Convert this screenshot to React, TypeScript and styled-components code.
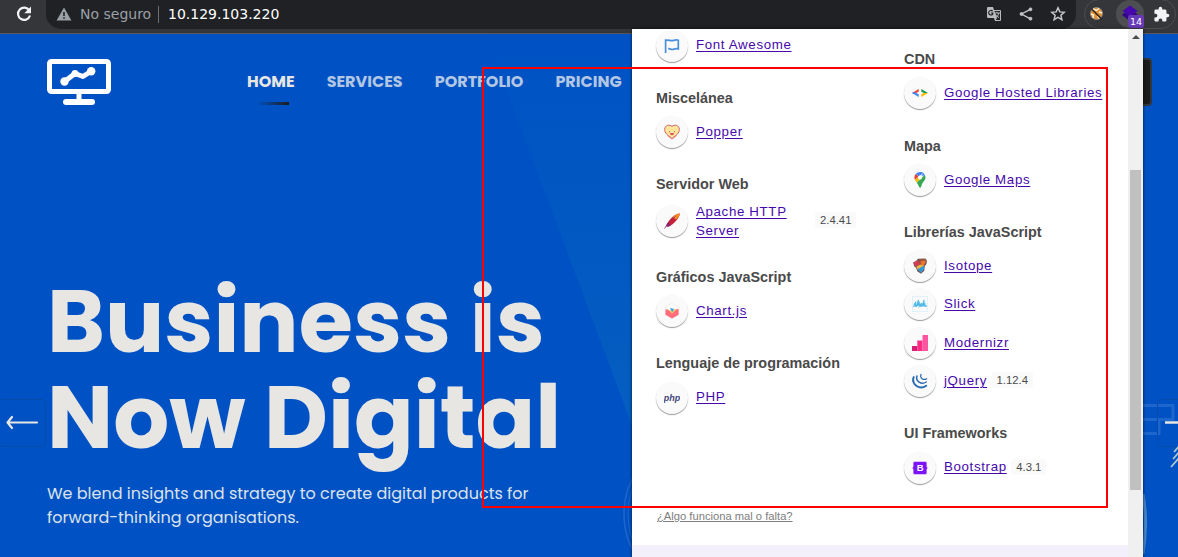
import React from 'react';
import styled, { createGlobalStyle } from 'styled-components';

const Global = createGlobalStyle`
  * { box-sizing: border-box; }
  body { margin: 0; overflow: hidden; background: #0052c4; }
  svg { display: block; flex: none; }
`;

const Browser = styled.div`
  position: relative;
  width: 1178px;
  height: 557px;
  overflow: hidden;
  display: flex;
  flex-direction: column;
  background: #0052c4;
`;

const Toolbar = styled.header`
  display: flex;
  align-items: flex-start;
  height: 34px;
  flex: none;
  background: #35363a;
  border-bottom: 1px solid #56575b;
`;

const ReloadButton = styled.div`
  display: flex;
  width: 46px;
  height: 28px;
  padding-left: 15px;
  align-items: center;
`;

const AddressBar = styled.div`
  display: flex;
  align-items: center;
  width: 1030px;
  height: 29px;
  padding: 0 10px 1px 10px;
  background: #202124;
  border-radius: 0 0 15px 15px;
  font: 14px/17px "DejaVu Sans", sans-serif;
`;

const SecurityLabel = styled.span`
  margin-left: 8px;
  padding-right: 8px;
  width: 79px;
  border-right: 1px solid #6d6e72;
  color: #9aa0a6;
  white-space: nowrap;
`;

const Address = styled.span`
  flex: 1;
  margin-left: 9px;
  color: #fff;
`;

const AddressActions = styled.div`
  display: flex;
  align-items: center;
  gap: 16px;
`;

const Extensions = styled.div`
  display: flex;
  align-items: center;
  width: 92px;
  height: 30px;
  margin: -1px 0 0 8px;
  padding-left: 4px;
  border: 1px solid #4c4d51;
  border-radius: 15px;
`;

const ExtensionSlot = styled.div<{ $active?: boolean }>`
  position: relative;
  display: flex;
  flex: none;
  align-items: center;
  justify-content: center;
  width: ${p => (p.$active ? 28 : 15)}px;
  height: 28px;
  margin-right: ${p => (p.$active ? 9 : 12)}px;
  border-radius: 14px;
  background: ${p => (p.$active ? '#4d4e51' : 'transparent')};
`;

const Badge = styled.span`
  position: absolute;
  left: 12px;
  top: 15px;
  width: 16px;
  height: 13px;
  background: #673ab7;
  border-radius: 2px;
  color: #fff;
  font: 9.5px/13px "DejaVu Sans", sans-serif;
  text-align: center;
`;

const Site = styled.main`
  position: relative;
  flex: 1;
  font-family: Poppins, Inter, sans-serif;
`;

const Backdrop = styled.svg`
  position: absolute;
  inset: 0;
`;

const SiteHeader = styled.div`
  position: relative;
  display: flex;
  height: 71px;
  padding: 25px 0 0 47px;
`;

const Nav = styled.nav`
  display: flex;
  gap: 32px;
  margin-left: 136px;
  padding-top: 12px;
`;

const NavItem = styled.a<{ $active?: boolean }>`
  display: flex;
  flex-direction: column;
  align-items: center;
  color: ${p => (p.$active ? '#e7e6e3' : '#b3c6e3')};
  font-size: 16px;
  font-weight: 700;
  line-height: 22px;
  white-space: nowrap;
  &::after {
    content: '';
    width: 32px;
    height: 4px;
    margin: 9px 0 0 4px;
    background: ${p => (p.$active ? 'linear-gradient(90deg, #0052c4, #1b1c1e)' : 'none')};
  }
`;

const Hero = styled.section`
  position: relative;
  padding: 169px 0 0 47px;
  color: #e7e6e3;
`;

const HeroTitle = styled.h1`
  margin: 0;
  font-size: 88px;
  font-weight: 700;
  line-height: 96px;
  white-space: nowrap;
`;

const HeroText = styled.p`
  margin: 16px 0 0;
  font-size: 16px;
  line-height: 24px;
  color: #dce2ea;
  white-space: nowrap;
`;

const PreviousButton = styled.div`
  position: absolute;
  left: -2px;
  top: 365px;
  width: 48px;
  height: 48px;
  padding: 15px 0 0 7px;
  border: 1px solid #064ba9;
  border-radius: 5px;
`;

const ContactButton = styled.div`
  position: absolute;
  left: 1100px;
  top: 24px;
  width: 52px;
  height: 48px;
  background: #181a1c;
  border: 2px solid #30363e;
  border-radius: 4px;
`;

const Popup = styled.aside`
  position: absolute;
  left: 632px;
  top: 29px;
  width: 511px;
  height: 528px;
  display: flex;
  background: #fff;
  box-shadow: 0 0 3px rgba(0, 0, 0, 0.75);
  font-family: "Liberation Sans", Arial, sans-serif;
`;

const PopupBody = styled.div`
  display: flex;
  flex-direction: column;
  width: 496px;
`;

const Columns = styled.div`
  display: flex;
  height: 479px;
  padding-left: 24px;
`;

const Column = styled.div<{ $offset: number }>`
  flex: none;
  width: 248px;
  padding-top: ${p => p.$offset}px;
`;

const Category = styled.section`
  margin-bottom: 20.4px;
`;

const CategoryTitle = styled.h2`
  margin: 0;
  padding: 0.4px 0 9.2px;
  color: #4a4a4a;
  font-size: 14.4px;
  font-weight: 700;
  line-height: 18px;
  white-space: nowrap;
`;

const TechRow = styled.div<{ $tall?: boolean }>`
  display: flex;
  align-items: center;
  padding-bottom: ${p => (p.$tall ? 6.9 : 6.4)}px;
`;

const TechIcon = styled.span`
  display: flex;
  flex: none;
  align-items: center;
  justify-content: center;
  width: 32px;
  height: 32px;
  margin-right: 8px;
  border-radius: 50%;
  background: #fafafa;
  box-shadow: 0 1px 1px rgba(0, 0, 0, 0.4);
`;

const TechLink = styled.a<{ $wrap?: boolean }>`
  width: ${p => (p.$wrap ? '118px' : 'auto')};
  padding-bottom: ${p => (p.$wrap ? 0 : 1.2)}px;
  color: #4608ad;
  font-size: 13.3px;
  line-height: ${p => (p.$wrap ? 19 : 19.2)}px;
  letter-spacing: 0.65px;
  text-decoration: underline;
  text-underline-offset: 2px;
  white-space: ${p => (p.$wrap ? 'normal' : 'nowrap')};
`;

const Version = styled.span<{ $wide?: boolean }>`
  margin: 0 0 ${p => (p.$wide ? 3 : 2)}px ${p => (p.$wide ? 1 : 4.5)}px;
  padding: 0 5px;
  border-radius: 3px;
  background: #fafafa;
  color: #4a4a4a;
  font-size: 11.3px;
  line-height: 16px;
`;

const ReportLink = styled.a`
  height: 37px;
  margin-left: 25px;
  color: #7e7e7e;
  font-size: 11.2px;
  line-height: 16px;
  text-decoration: underline;
`;

const PopupFooter = styled.div`
  flex: 1;
  background: #f3f0fb;
`;

const ScrollTrack = styled.div`
  display: flex;
  flex-direction: column;
  align-items: center;
  width: 15px;
  background: #f0f0f0;
`;

const ScrollArrow = styled.span`
  margin: 6px 0 131px;
  border: 4px solid transparent;
  border-top: 0;
  border-bottom-color: #4c4c4c;
`;

const ScrollThumb = styled.span`
  width: 11px;
  height: 320px;
  background: #c0c0c0;
`;

const Highlight = styled.div`
  position: absolute;
  left: 482px;
  top: 67px;
  width: 626px;
  height: 441px;
  border: 2px solid #f00;
`;

const icons: Record<string, React.ReactNode> = {
  flag: (
    <g fill="none" stroke="#4a8fdc" strokeWidth="1.7">
      <path d="M1.6 1.2V15M1.8 2.6c2.2-1.4 4 .3 6 .1 2-.1 3.5-1.3 6.5-.5v8.7c-3.1-1-4.4.8-6.4.6-1.2-.1-2.2-1-3.7-.8" />
    </g>
  ),
  heart: (
    <g>
      <path d="M8 14.5C3.7 11.2.5 9.3.7 5.2 1 .8 5.6.3 8 2.4c2.4-2.1 7-1.6 7.3 2.8.2 4.1-3 6-7.3 9.3z" fill="#ffe69c" stroke="#d0606a" strokeWidth="1" />
      <path d="M5.5 7v1.2M10.5 7v1.2M6 9.5q2 3 4 0z" fill="#dc4c58" stroke="#dc4c58" strokeWidth=".8" />
      <path d="M3.5 11.5l4 3.5M12.5 11.5l-4 3.5" stroke="#e77a7d" strokeWidth=".8" />
    </g>
  ),
  feather: (
    <g>
      <path d="M2.3 13.4C2.8 8.5 9.8 1 15.6.4c.8 3-5.2 11-11.2 13.2z" fill="#c92037" />
      <path d="M8.5 4.2C10.4 2.3 13.3.5 15.6.4c.5 2.1-1.4 4.6-3.5 6z" fill="#f48a20" />
      <path d="M2.3 13.4c.1-1.4.9-3.2 2.2-4.2l2.3 3.2c-.8.7-1.5 1-2.4 1.2z" fill="#852470" />
      <path d="M.6 15.6C3 11 6 7.5 11.5 3.5" fill="none" stroke="#8d2762" strokeWidth=".8" />
    </g>
  ),
  chart: (
    <g>
      <path d="M8 0l6.6 3.8v8L8 15.6 1.4 11.8v-8z" fill="#fafafa" stroke="#e7e7e7" strokeWidth=".5" />
      <path d="M1.5 6.7c3-1.6 4.4 2.8 6.5 2.6 2.6-.1 3-4.6 6.6-3.1v5.6L8 15.6l-6.5-3.8z" fill="#ff6b7c" />
      <path d="M4.6 7.1c1.3-.2 2-.2 3.2 1.2 1.5-.5 3-3 5-2.2L8 10.7z" fill="#ffcb4e" />
      <path d="M6 5.5c1.2-.5 2.1.2 4.2.4L8.2 9.3z" fill="#3aa2eb" />
    </g>
  ),
  php: (
    <text x="-.3" y="10.5" textLength="16.5" fill="#43477a" fontFamily="Liberation Sans" fontSize="9" fontStyle="italic" fontWeight="700">php</text>
  ),
  hosted: (
    <g>
      <path d="M0 8l6.7-4v2.8L4.1 8z" fill="#e94335" />
      <path d="M0 8l6.7 3.9V9.2L4.1 8z" fill="#4285f4" />
      <path d="M0 8l1.8-1.1L4.1 8 1.8 9.1z" fill="#4285f4" />
      <path d="M16 8L9.3 4v2.8L11.9 8z" fill="#159957" />
      <path d="M16 8l-6.7 3.9V9.2L11.9 8z" fill="#fbbc04" />
    </g>
  ),
  maps: (
    <g>
      <path d="M8 0a5.5 5.5 0 00-4.3 2.1l3 2.5L11.5 1A5.5 5.5 0 008 0z" fill="#4285f4" />
      <path d="M3.7 2.1A5.5 5.5 0 003 8l3.7-3.4z" fill="#ea4335" />
      <path d="M3 8l1.8 2.8L10 4.5 6.7 4.6z" fill="#fbbc04" />
      <path d="M12.8 2.8c2 4.4-.9 6.1-2.5 8.7-.9 1.4-.8 3.9-2.3 4.5-1.2-1.1-1.5-3.3-3.2-5.2z" fill="#34a853" />
      <path d="M9.4 3.7l2.1-2.6 1.6 2.3z" fill="#4285f4" />
      <circle cx="8" cy="5.5" r="2" fill="#fff" />
    </g>
  ),
  isotope: (
    <g>
      <path d="M1 4.5l3-1.5 2-2.3 7.5-.2 1.5 2.5-.6 3-1.7 2.4-.4 4.3L9 15.8l-3.8-2.5-1-3.5-1.7-1z" fill="#76545a" />
      <path d="M1.7 4.5L6 2.5l2 3.5-4.5 2.5z" fill="#d93c52" />
      <path d="M7.2 1.5l6-.5-.5 4-4.8 1.3z" fill="#a55532" />
      <path d="M8.5 3.5l5.5-1-1.5 4-2.6 1.4z" fill="#f1742a" />
      <path d="M4.4 8.5l4-2 4 1-6.5 4.5z" fill="#f8b339" />
      <path d="M5.5 11.3l6.2-3.5.5 2.9L9 14.8z" fill="#309bd6" />
    </g>
  ),
  slick: (
    <g>
      <path d="M.3.3h15.4v15.4H.3z" fill="none" stroke="#c8e8f8" strokeWidth=".6" />
      <path d="M1 10.3l2.2-.5.3-3-1.2 1.5 2 2L6.5 4 5.2 10l2-3v3.2l2.4-3.1-.7 3.2 1.5-.5L12.2 4l-1.4 6.3 2-2.6.2 2.5 1.9-.3" fill="none" stroke="#4cb8e8" strokeWidth="1.2" />
    </g>
  ),
  modernizr: (
    <g>
      <path d="M0 11h5.3v5H0z" fill="#d91c73" />
      <path d="M5.3 5.5h5.2V16H5.3z" fill="#ff2b85" />
      <path d="M10.5 0H16v16h-5.5z" fill="#ff55a1" />
    </g>
  ),
  jquery: (
    <g fill="none" stroke="#286ab2" strokeLinecap="round">
      <path d="M1.7 4.1C-1 10.5 7.2 17.7 14.2 12.8" strokeWidth="1.9" />
      <path d="M5 3C3.2 8 9.3 12.5 14.2 9" strokeWidth="1.5" />
      <path d="M9 1.4C7.7 5 11.3 7.8 14.7 5.7" strokeWidth="1.2" />
    </g>
  ),
  bootstrap: (
    <g>
      <path d="M2.4 1.8h11.2q1 0 1 1v3.4q0 1.8 1.4 1.8-1.4 0-1.4 1.8v3.4q0 1-1 1H2.4q-1 0-1-1V9.8Q1.4 8 0 8q1.4 0 1.4-1.8V2.8q0-1 1-1z" fill="#7b13f6" />
      <text x="4.7" y="11.4" fill="#fff" fontFamily="Liberation Sans" fontSize="9.5" fontWeight="700">B</text>
    </g>
  ),
};

interface TechProps {
  icon: string;
  name: string;
  version?: string;
  wrap?: boolean;
}

const Tech = ({ icon, name, version, wrap }: TechProps) => (
  <TechRow $tall={wrap}>
    <TechIcon><svg width="16" height="16" viewBox="0 0 16 16">{icons[icon]}</svg></TechIcon>
    <TechLink $wrap={wrap}>{name}</TechLink>
    {version && <Version $wide={wrap}>{version}</Version>}
  </TechRow>
);

const Group = ({ title, items }: { title?: string; items: TechProps[] }) => (
  <Category>
    {title && <CategoryTitle>{title}</CategoryTitle>}
    {items.map(item => <Tech key={item.name} {...item} />)}
  </Category>
);

export default function App() {
  return (
    <Browser>
      <Global />
      <Toolbar>
        <ReloadButton>
          <svg width="18" height="18" viewBox="0 0 18 18" fill="none" stroke="#f1f3f4" strokeWidth="2.2">
            <path d="M14.3 5.5A6.1 6.1 0 1 0 15 10.5" />
            <path d="M16 1.5v6.7H9.3z" fill="#f1f3f4" stroke="none" />
          </svg>
        </ReloadButton>
        <AddressBar>
          <svg width="16" height="16" viewBox="0 0 16 16">
            <path d="M8 1.5L15.4 14.5H.6z" fill="#9aa0a6" />
            <path d="M7.2 6h1.6v4H7.2zM7.2 11.2h1.6v1.6H7.2z" fill="#202124" />
          </svg>
          <SecurityLabel>No seguro</SecurityLabel>
          <Address>10.129.103.220</Address>
          <AddressActions>
            <svg width="16" height="16" viewBox="0 0 16 16">
              <path d="M2 1h5l1 3h6q1 0 1 1v9q0 1-1 1H9l-1-3H2q-1 0-1-1V2q0-1 1-1z" fill="#b8babd" />
              <path d="M8.5 5H14v9H9.7l1.2-1.5z" fill="#202124" />
              <path d="M8.7 7H14M11 5.8V7M9.3 8.2q1.2 2.4 3.8 3.4M12.9 7q-.7 3.3-3.2 4.5" stroke="#b8babd" fill="none" />
              <path d="M6.7 5.2A2.3 2.3 0 104.9 9q2 0 2-2H5" fill="none" stroke="#202124" strokeWidth="1.1" />
            </svg>
            <svg width="16" height="16" viewBox="0 0 16 16" fill="#c4c7c9" stroke="#c4c7c9">
              <path d="M12.4 3.4L3.5 8l8.9 4.8" fill="none" strokeWidth="1.4" />
              <circle cx="12.5" cy="3.3" r="1.4" /><circle cx="3.5" cy="8" r="1.4" /><circle cx="12.5" cy="12.7" r="1.4" />
            </svg>
            <svg width="16" height="16" viewBox="0 0 16 16" fill="none" stroke="#c4c7c9" strokeWidth="1.5">
              <path d="M8 1.8l1.8 4.1 4.5.4-3.4 3 1 4.4L8 11.4l-3.9 2.3 1-4.4-3.4-3 4.5-.4z" />
            </svg>
          </AddressActions>
        </AddressBar>
        <Extensions>
          <ExtensionSlot>
            <svg width="15" height="17" viewBox="0 0 15 17">
              <circle cx="7.5" cy="7.5" r="6" fill="#e58f33" stroke="#8f8a82" strokeWidth="1" />
              <path d="M4 3l3.5 1.5L10 2.5M2 8l2.5 1-.5 3M10 6l3 1M8.500 10l2 2.500" stroke="#fff2d9" strokeWidth="1.5" fill="none" />
              <path d="M2.2 2.5l10.5 10.6" stroke="#302b26" strokeWidth="1.6" />
            </svg>
          </ExtensionSlot>
          <ExtensionSlot $active>
            <svg width="18" height="18" viewBox="0 0 18 18">
              <path d="M9 3l8 7-8 6-8-6z" fill="#350587" /><path d="M9 .5L16.5 6 9 11.5 1.5 6z" fill="#4608ad" />
            </svg>
            <Badge>14</Badge>
          </ExtensionSlot>
          <svg width="17" height="17" viewBox="0 0 24 24" fill="#f1f3f4">
            <path d="M20.5 11H19V7a2 2 0 0 0-2-2h-4V3.5a2.5 2.5 0 0 0-5 0V5H4a2 2 0 0 0-2 2v3.8h1.5a2.7 2.7 0 0 1 0 5.4H2V20a2 2 0 0 0 2 2h3.8v-1.5a2.7 2.7 0 0 1 5.4 0V22H17a2 2 0 0 0 2-2v-4h1.5a2.5 2.5 0 0 0 0-5z" />
          </svg>
        </Extensions>
      </Toolbar>
      <Site>
        <Backdrop width="1178" height="523" viewBox="0 34 1178 523">
          <defs>
            <linearGradient id="beam" x1="0" y1="0" x2="0" y2="1">
              <stop offset="0" stopColor="#0052c4" /><stop offset="1" stopColor="#055fc0" />
            </linearGradient>
          </defs>
          <path d="M486 34H640V447z" fill="url(#beam)" />
          <g fill="none" stroke="#1f66cb">
            <ellipse cx="667" cy="514" rx="43" ry="59" strokeWidth="1.5" />
            <ellipse cx="667" cy="514" rx="39" ry="56" />
            <path d="M1143 405.5h30v14h-30M1143 433.5h16v-14" strokeWidth="3" stroke="#1c66ce" />
            <path d="M1143 494q5 28 0 60" stroke="#4787ca" strokeWidth="3" />
          </g>
          <rect x="1157.5" y="399.5" width="48" height="47" rx="5" fill="none" stroke="#064ba9" />
          <path d="M1165 422.5h13" stroke="#e7e6e3" strokeWidth="2.5" />
          <path d="M1174 452l6-7M1173 459l7-8M1171 467l8-9" stroke="#a9c6d2" strokeWidth="1.8" />
        </Backdrop>
        <ContactButton />
        <SiteHeader>
          <svg width="64" height="46" viewBox="0 0 64 46" fill="none" stroke="#fff">
            <rect x="2.5" y="2.5" width="59" height="30" rx="2" strokeWidth="5" />
            <path d="M32 34v7" strokeWidth="5" />
            <path d="M19 43h26" strokeWidth="6" strokeLinecap="round" />
            <path d="M17.5 22.5L28 14.5l8 3L44.5 12" strokeWidth="5" strokeLinejoin="round" />
            <g fill="#fff" stroke="none"><circle cx="17.5" cy="22.5" r="4.2" /><circle cx="28" cy="14.5" r="3.5" /><circle cx="44.2" cy="12.3" r="4.2" /></g>
          </svg>
          <Nav>
            <NavItem $active>HOME</NavItem>
            <NavItem>SERVICES</NavItem>
            <NavItem>PORTFOLIO</NavItem>
            <NavItem>PRICING</NavItem>
          </Nav>
        </SiteHeader>
        <Hero>
          <HeroTitle>Business is<br />Now Digital</HeroTitle>
          <HeroText>
            We blend insights and strategy to create digital products for<br />
            forward-thinking organisations.
          </HeroText>
        </Hero>
        <PreviousButton>
          <svg width="34" height="15" viewBox="0 0 34 15" fill="none" stroke="#e7e6e3" strokeWidth="2.2" strokeLinecap="round" strokeLinejoin="round">
            <path d="M31 7.5H1.500M6 2L1.5 7.5 6 13" />
          </svg>
        </PreviousButton>
      </Site>
      <Popup>
        <PopupBody>
          <Columns>
            <Column $offset={0.6}>
              <Group items={[{ icon: 'flag', name: 'Font Awesome' }]} />
              <Group title="Miscelánea" items={[{ icon: 'heart', name: 'Popper' }]} />
              <Group title="Servidor Web" items={[{ icon: 'feather', name: 'Apache HTTP Server', version: '2.4.41', wrap: true }]} />
              <Group title="Gráficos JavaScript" items={[{ icon: 'chart', name: 'Chart.js' }]} />
              <Group title="Lenguaje de programación" items={[{ icon: 'php', name: 'PHP' }]} />
            </Column>
            <Column $offset={20.8}>
              <Group title="CDN" items={[{ icon: 'hosted', name: 'Google Hosted Libraries' }]} />
              <Group title="Mapa" items={[{ icon: 'maps', name: 'Google Maps' }]} />
              <Group
                title="Librerías JavaScript"
                items={[
                  { icon: 'isotope', name: 'Isotope' },
                  { icon: 'slick', name: 'Slick' },
                  { icon: 'modernizr', name: 'Modernizr' },
                  { icon: 'jquery', name: 'jQuery', version: '1.12.4' },
                ]}
              />
              <Group title="UI Frameworks" items={[{ icon: 'bootstrap', name: 'Bootstrap', version: '4.3.1' }]} />
            </Column>
          </Columns>
          <ReportLink>¿Algo funciona mal o falta?</ReportLink>
          <PopupFooter />
        </PopupBody>
        <ScrollTrack><ScrollArrow /><ScrollThumb /></ScrollTrack>
      </Popup>
      <Highlight />
    </Browser>
  );
}
